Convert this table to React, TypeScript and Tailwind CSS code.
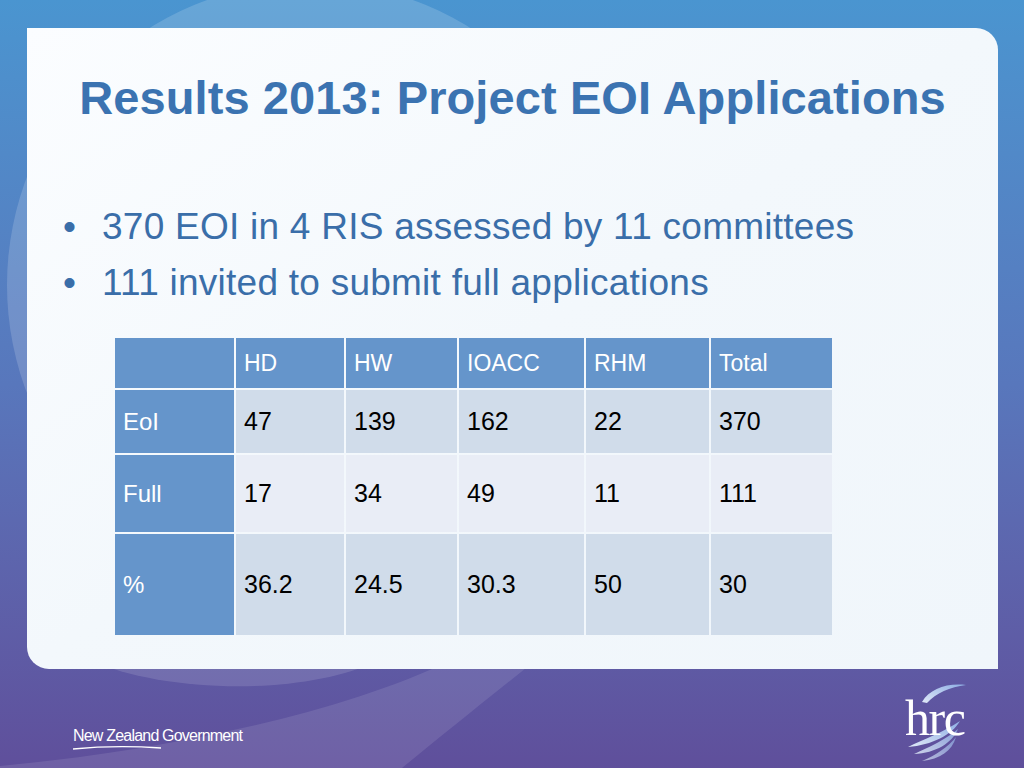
import React from "react";

const cols = ["", "HD", "HW", "IOACC", "RHM", "Total"];
const rows = [
  { label: "EoI", cells: ["47", "139", "162", "22", "370"], bg: "bg-[#d0dcea]" },
  { label: "Full", cells: ["17", "34", "49", "11", "111"], bg: "bg-[#e9edf6]" },
  { label: "%", cells: ["36.2", "24.5", "30.3", "50", "30"], bg: "bg-[#d0dcea]" },
];

const Backdrop = () => (
  <svg className="absolute inset-0" width="1024" height="768" viewBox="0 0 1024 768">
    <circle cx="310" cy="285" r="303" fill="#ffffff" fillOpacity="0.16" />
    <path d="M90 660 C 160 692, 300 698, 380 660 Z" fill="#ffffff" fillOpacity="0.13" />
    <path d="M0 766 C 150 752, 330 718, 452 660 L 536 660 C 486 700, 436 740, 402 768 L 0 768 Z" fill="#ffffff" fillOpacity="0.1" />
  </svg>
);

const HrcLogo = () => (
  <div className="relative w-[80px] h-[90px]">
    <svg className="absolute inset-0" width="80" height="90" viewBox="0 0 80 90">
      <defs>
        <linearGradient id="sw" x1="0" y1="1" x2="1" y2="0">
          <stop offset="0" stopColor="#dfe8f7" />
          <stop offset="1" stopColor="#8eaee4" />
        </linearGradient>
      </defs>
      <path d="M22 27 C 30 14, 46 8, 66 10 C 50 12, 36 18, 27 28 Z" fill="url(#sw)" />
      <path d="M8 72 C 24 64, 42 58, 60 46 C 52 60, 32 70, 8 72 Z" fill="url(#sw)" />
      <path d="M14 79 C 30 72, 46 64, 58 54 C 52 68, 36 78, 14 79 Z" fill="url(#sw)" opacity="0.85" />
      <path d="M22 86 C 36 80, 48 72, 56 62 C 52 76, 40 84, 22 86 Z" fill="url(#sw)" opacity="0.7" />
    </svg>
    <span className="absolute left-[5px] top-[18px] text-white text-[50px] leading-none tracking-[-1.5px] [font-family:'Liberation_Serif',serif]">
      hrc
    </span>
  </div>
);

export default function App() {
  return (
    <div className="relative w-[1024px] h-[768px] overflow-hidden bg-gradient-to-b from-[#4a95d0] via-[#5877bc] to-[#5f4f9b] [font-family:'Liberation_Sans',Arial,sans-serif]">
      <Backdrop />
      <div className="relative flex flex-col">
        <div className="ml-[27px] mt-[28px] w-[971px] h-[641px] rounded-tr-[22px] rounded-bl-[22px] bg-gradient-to-br from-[#fbfdff] via-[#f3f8fc] to-[#f0f6fb] flex flex-col">
          <h1 className="mt-[46px] text-center text-[#3b73b1] text-[47px] font-bold leading-none tracking-[0.1px]">
            Results 2013: Project EOI Applications
          </h1>
          <ul className="mt-[87px] ml-[36px] flex flex-col gap-[19px] text-[#3a6ea9] text-[37px] leading-[37px] tracking-[0.25px]">
            <li className="flex">
              <span className="w-[39px]">•</span>
              <span>370 EOI in 4 RIS assessed by 11 committees</span>
            </li>
            <li className="flex">
              <span className="w-[39px]">•</span>
              <span>111 invited to submit full applications</span>
            </li>
          </ul>
          <div className="mt-[37px] ml-[88px] grid grid-cols-[119px_108px_111px_125px_123px_121px] grid-rows-[50px_63px_77px_101px] gap-[2px] w-fit">
            {cols.map((c, i) => (
              <div key={i} className="bg-[#6595cb] text-white text-[23px] flex items-center pl-[8px]">
                {c}
              </div>
            ))}
            {rows.map((r) => (
              <React.Fragment key={r.label}>
                <div className="bg-[#6595cb] text-white text-[24px] flex items-center pl-[8px]">{r.label}</div>
                {r.cells.map((v, j) => (
                  <div key={j} className={`${r.bg} text-black text-[25px] flex items-center pl-[8px]`}>
                    {v}
                  </div>
                ))}
              </React.Fragment>
            ))}
          </div>
        </div>
        <div className="flex items-start h-[99px]">
          <div className="flex flex-col ml-[73px] mt-[59px]">
            <span className="text-white text-[16px] leading-none tracking-[-0.8px]">
              New Zealand Government
            </span>
            <svg width="90" height="6" viewBox="0 0 90 6" className="mt-[1px]">
              <path d="M0 4 C 30 1, 60 1, 88 3" stroke="#ffffff" strokeWidth="1.3" fill="none" />
            </svg>
          </div>
          <div className="ml-auto mr-[44px] mt-[6px]">
            <HrcLogo />
          </div>
        </div>
      </div>
    </div>
  );
}
